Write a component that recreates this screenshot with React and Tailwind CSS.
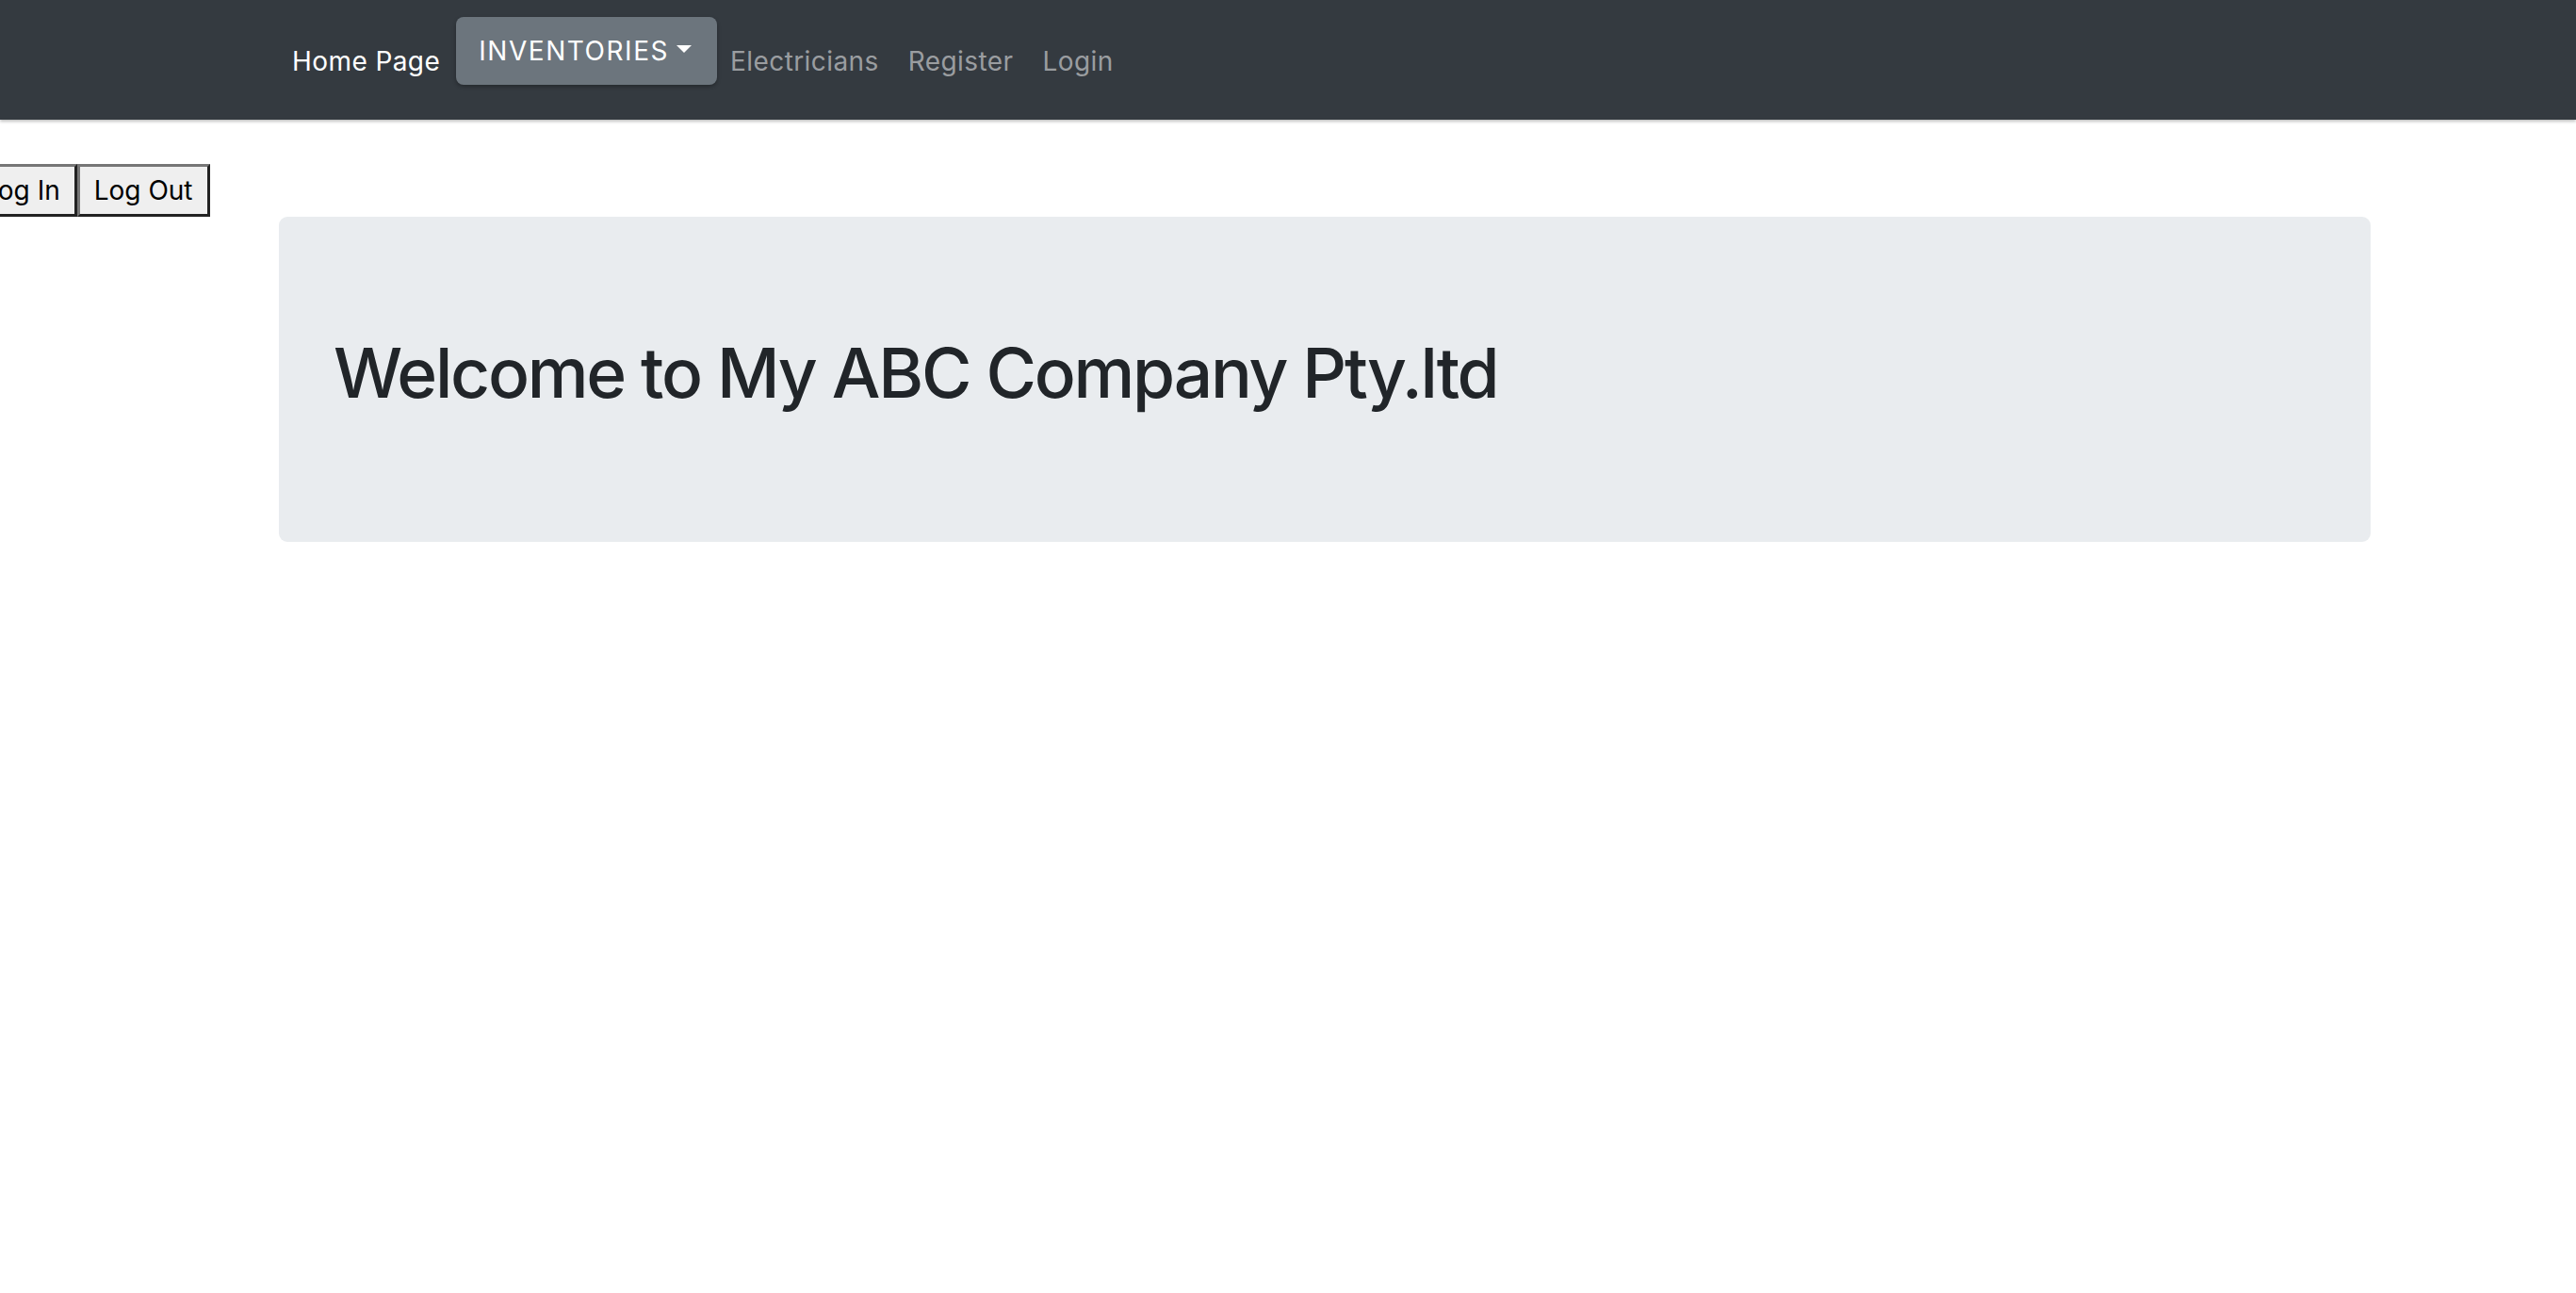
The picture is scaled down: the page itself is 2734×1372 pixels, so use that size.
import { useState } from 'react';

const links = ['Electricians', 'Register', 'Login'];

export default function App() {
  const [loggedIn, setLoggedIn] = useState(false);

  return (
    <div className="min-h-screen bg-white font-['Inter',sans-serif] text-[#212529]">
      {/* Navbar */}
      <nav className="h-[127px] bg-[#343a40] shadow-[0_2px_3px_rgba(0,0,0,0.25)] flex items-start pl-[296px]">
        <a href="#" className="mt-[44px] px-[14px] text-[28px] leading-[42px] tracking-[0.015em] text-white">
          Home Page
        </a>
        <button className="ml-[3px] mt-[18px] h-[72px] pl-[24px] pr-[27px] rounded-[8px] bg-[#6c757d] text-white text-[28px] tracking-[0.055em] flex items-center shadow-[0_2px_4px_rgba(0,0,0,0.3)]">
          <span>INVENTORIES</span>
          <span className="ml-[8px] -mt-[4px] w-0 h-0 border-l-[8px] border-r-[8px] border-t-[8px] border-l-transparent border-r-transparent border-t-white" />
        </button>
        {links.map((l) => (
          <a
            key={l}
            href="#"
            className="mt-[44px] px-[14px] mr-[3px] text-[28px] leading-[42px] tracking-[0.015em] text-[#9a9da0]"
          >
            {l}
          </a>
        ))}
      </nav>

      {/* Log buttons */}
      <div className="flex mt-[47px] -ml-[36px]">
        <button
          onClick={() => setLoggedIn(true)}
          className="h-[56px] px-[15px] bg-[#efefef] text-black text-[28px] border-[3px] border-t-[#767676] border-l-[#767676] border-r-[#222] border-b-[#222]"
        >
          Log In
        </button>
        <button
          onClick={() => setLoggedIn(false)}
          className="h-[56px] px-[15px] bg-[#efefef] text-black text-[28px] border-[3px] border-t-[#767676] border-l-[#767676] border-r-[#222] border-b-[#222]"
        >
          Log Out
        </button>
      </div>

      {/* Jumbotron */}
      <div className="ml-[296px] w-[2220px] rounded-[9px] bg-[#e9ecef] pt-[122px] pb-[135px] px-[58px]">
        <h1 className="text-[73px] leading-[1.2] font-medium tracking-[-0.031em] text-[#212529]">
          Welcome to My ABC Company Pty.ltd
        </h1>
      </div>
      {loggedIn && <span className="sr-only">logged in</span>}
    </div>
  );
}
